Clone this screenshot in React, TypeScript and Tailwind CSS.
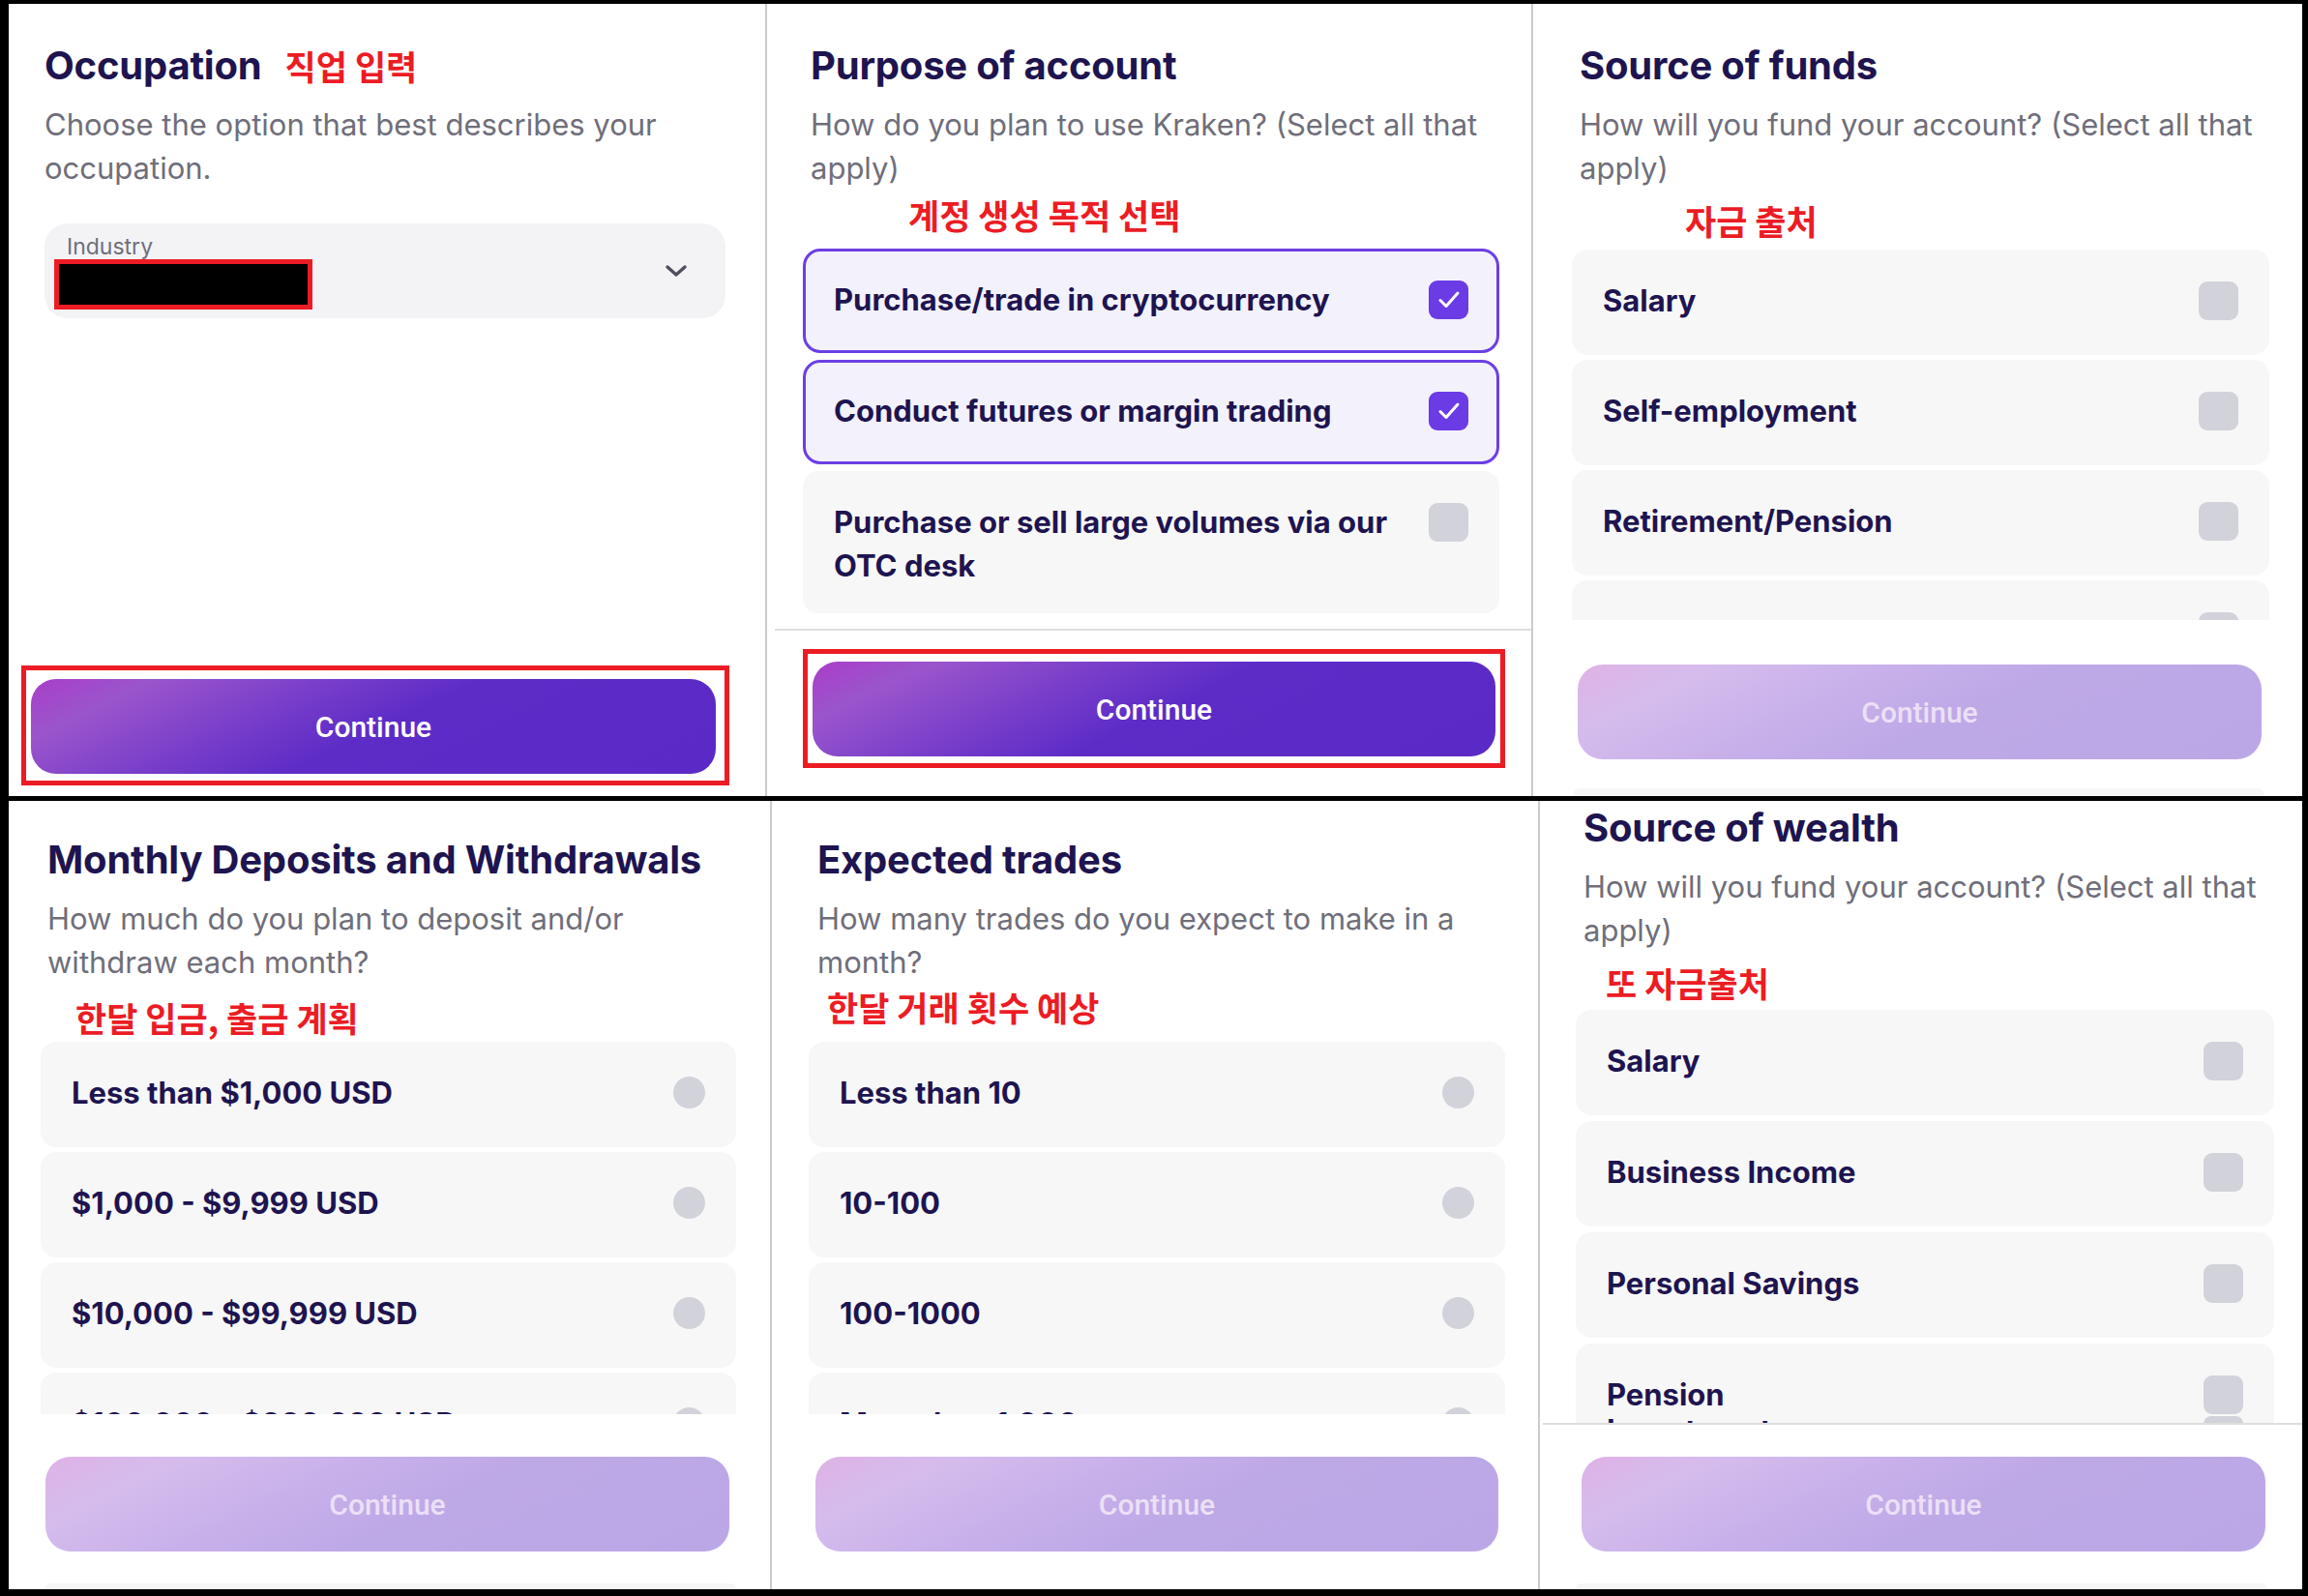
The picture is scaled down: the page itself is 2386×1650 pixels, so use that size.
import React from "react";

const TITLE = "text-[40px] font-bold leading-[48px] text-[#1e1450] whitespace-nowrap tracking-[-0.005em]";
const SUB = "text-[31px] leading-[45px] text-[#6f6e7a] whitespace-nowrap";
const RED = "font-['Noto_Sans_CJK_KR',sans-serif] font-bold text-[35px] leading-[40px] text-[#ec1c24] whitespace-nowrap";
const ROWTEXT = "text-[31px] font-bold leading-[45px] text-[#1e1450] whitespace-nowrap";

function Check({ on }: { on?: boolean }) {
  if (on) {
    return (
      <div className="mt-[3px] flex h-[40px] w-[41px] shrink-0 items-center justify-center rounded-[9px] bg-[#6b3be6]">
        <svg width="24" height="20" viewBox="0 0 24 20" fill="none">
          <path d="M3 10.5 L9 16.5 L21 3" stroke="white" strokeWidth="3" strokeLinecap="round" strokeLinejoin="round" />
        </svg>
      </div>
    );
  }
  return <div className="mt-[3px] h-[40px] w-[41px] shrink-0 rounded-[9px] bg-[#d2d2da]" />;
}

function Radio() {
  return <div className="mt-[6px] h-[33px] w-[33px] shrink-0 rounded-full bg-[#d2d2da]" />;
}

function Row({
  lines,
  control,
  selected,
  h,
  extra,
}: {
  lines: string[];
  control: React.ReactNode;
  selected?: boolean;
  h: string;
  extra?: React.ReactNode;
}) {
  return (
    <div
      className={
        selected
          ? `flex shrink-0 items-start justify-between rounded-[18px] border-[3px] border-[#6b3fe4] bg-[#f3f1fc] px-[29px] pt-[27px] ${h}`
          : `flex shrink-0 items-start justify-between rounded-[16px] bg-[#f7f7f8] px-[32px] pt-[30px] ${h}`
      }
    >
      <div className={ROWTEXT}>
        {lines.map((l, i) => (
          <div key={i}>{l}</div>
        ))}
      </div>
      <div className="flex flex-col">
        {control}
        {extra}
      </div>
    </div>
  );
}

function Btn({ on, className }: { on?: boolean; className: string }) {
  return (
    <div
      className={
        on
          ? `flex h-[98px] shrink-0 items-center justify-center rounded-[26px] bg-[linear-gradient(154deg,#aa3ec8_0%,#9a55cc_14%,#7c40ca_32%,#5d2cc7_51%,#5b2ac6_100%)] font-['Roboto',sans-serif] text-[30px] font-medium text-white ${className}`
          : `flex h-[98px] shrink-0 items-center justify-center rounded-[26px] bg-[linear-gradient(154deg,#dfb2e5_0%,#d5bced_16%,#c8b1ea_36%,#bea9e7_55%,#bba7e6_100%)] font-['Roboto',sans-serif] text-[30px] font-medium text-[#ebe0f6] ${className}`
      }
    >
      Continue
    </div>
  );
}

function Sub({ a, b, className }: { a: string; b: string; className: string }) {
  return (
    <div className={`${SUB} ${className}`}>
      <div>{a}</div>
      <div>{b}</div>
    </div>
  );
}

export default function App() {
  return (
    <div className="flex h-[1650px] w-[2386px] flex-col bg-black pb-[7px] pl-[9px] pr-[6px] pt-[4px] font-['Inter',sans-serif]">
      {/* TOP ROW */}
      <div className="flex h-[819px] shrink-0 bg-white">
        {/* Occupation */}
        <div className="flex h-full w-[782px] shrink-0 flex-col">
          <div className="ml-[37px] mt-[40px] flex items-center gap-[24px]">
            <div className={TITLE}>Occupation</div>
            <div className={RED}>직업 입력</div>
          </div>
          <Sub className="ml-[37px] mt-[14px]" a="Choose the option that best describes your" b="occupation." />
          <div className="ml-[37px] mt-[35px] flex h-[98px] w-[704px] items-center justify-between rounded-[24px] bg-[#f3f3f6]">
            <div className="flex h-full flex-col">
              <div className="ml-[23px] mt-[11px] text-[23px] leading-[26px] text-[#6f6e7a]">Industry</div>
              <div className="ml-[10px] h-[52px] w-[267px] border-[5px] border-[#ec1c24] bg-black" />
            </div>
            <svg className="mr-[38px]" width="26" height="16" viewBox="0 0 26 16" fill="none">
              <path d="M4 4 L13 12 L22 4" stroke="#4f4e5e" strokeWidth="3.4" strokeLinecap="round" strokeLinejoin="round" />
            </svg>
          </div>
          <div className="mb-[11px] ml-[13px] mt-auto w-[732px] border-[5px] border-[#ec1c24] pb-[7px] pl-[5px] pr-[9px] pt-[9px]">
            <Btn on className="w-full" />
          </div>
        </div>

        {/* Purpose of account */}
        <div className="flex h-full w-[792px] shrink-0 flex-col border-l-2 border-[#cbcbcb]">
          <div className={`${TITLE} ml-[45px] mt-[40px]`}>Purpose of account</div>
          <Sub className="ml-[45px] mt-[14px]" a="How do you plan to use Kraken? (Select all that" b="apply)" />
          <div className={`${RED} ml-[146px] mt-[6px]`}>계정 생성 목적 선택</div>
          <div className="ml-[37px] mt-[15px] flex w-[720px] flex-col gap-[7px]">
            <Row selected h="h-[108px]" lines={["Purchase/trade in cryptocurrency"]} control={<Check on />} />
            <Row selected h="h-[108px]" lines={["Conduct futures or margin trading"]} control={<Check on />} />
            <Row h="h-[147px]" lines={["Purchase or sell large volumes via our", "OTC desk"]} control={<Check />} />
          </div>
          <div className="ml-[8px] mt-[16px] h-[2px] shrink-0 bg-[#dedede]" />
          <div className="ml-[37px] mt-[19px] w-[726px] border-[5px] border-[#ec1c24] px-[5px] pb-[7px] pt-[8px]">
            <Btn on className="w-full" />
          </div>
        </div>

        {/* Source of funds */}
        <div className="flex h-full w-[797px] shrink-0 flex-col border-l-2 border-[#cbcbcb]">
          <div className={`${TITLE} ml-[48px] mt-[40px]`}>Source of funds</div>
          <Sub className="ml-[48px] mt-[14px]" a="How will you fund your account? (Select all that" b="apply)" />
          <div className={`${RED} ml-[157px] mt-[12px]`}>자금 출처</div>
          <div className="ml-[40px] mt-[10px] flex h-[383px] w-[721px] shrink-0 flex-col gap-[5px] overflow-hidden">
            <Row h="h-[109px]" lines={["Salary"]} control={<Check />} />
            <Row h="h-[109px]" lines={["Self-employment"]} control={<Check />} />
            <Row h="h-[109px]" lines={["Retirement/Pension"]} control={<Check />} />
            <Row h="h-[109px]" lines={["Investments"]} control={<Check />} />
          </div>
          <Btn className="ml-[46px] mt-[46px] w-[707px]" />
          <div className="ml-[41px] mt-auto h-[8px] w-[715px] rounded-t-[12px] bg-[#f6f6f8]" />
        </div>
      </div>

      {/* BOTTOM ROW */}
      <div className="mt-[5px] flex h-[815px] shrink-0 bg-white">
        {/* Monthly deposits */}
        <div className="flex h-full w-[787px] shrink-0 flex-col">
          <div className={`${TITLE} ml-[40px] mt-[37px]`}>Monthly Deposits and Withdrawals</div>
          <Sub className="ml-[40px] mt-[14px]" a="How much do you plan to deposit and/or" b="withdraw each month?" />
          <div className={`${RED} ml-[69px] mt-[15px]`}>한달 입금, 출금 계획</div>
          <div className="ml-[33px] mt-[5px] flex h-[385px] w-[719px] shrink-0 flex-col gap-[5px] overflow-hidden">
            <Row h="h-[109px]" lines={["Less than $1,000 USD"]} control={<Radio />} />
            <Row h="h-[109px]" lines={["$1,000 - $9,999 USD"]} control={<Radio />} />
            <Row h="h-[109px]" lines={["$10,000 - $99,999 USD"]} control={<Radio />} />
            <Row h="h-[109px]" lines={["$100,000 - $999,999 USD"]} control={<Radio />} />
          </div>
          <Btn className="ml-[38px] mt-[44px] w-[707px]" />
          <div className="ml-[37px] mt-auto h-[6px] w-[715px] rounded-t-[12px] bg-[#f6f6f8]" />
        </div>

        {/* Expected trades */}
        <div className="flex h-full w-[794px] shrink-0 flex-col border-l-2 border-[#cbcbcb]">
          <div className={`${TITLE} ml-[47px] mt-[37px]`}>Expected trades</div>
          <Sub className="ml-[47px] mt-[14px]" a="How many trades do you expect to make in a" b="month?" />
          <div className={`${RED} ml-[57px] mt-[4px]`}>한달 거래 횟수 예상</div>
          <div className="ml-[38px] mt-[16px] flex h-[385px] w-[720px] shrink-0 flex-col gap-[5px] overflow-hidden">
            <Row h="h-[109px]" lines={["Less than 10"]} control={<Radio />} />
            <Row h="h-[109px]" lines={["10-100"]} control={<Radio />} />
            <Row h="h-[109px]" lines={["100-1000"]} control={<Radio />} />
            <Row h="h-[109px]" lines={["More than 1,000"]} control={<Radio />} />
          </div>
          <Btn className="ml-[45px] mt-[44px] w-[706px]" />
        </div>

        {/* Source of wealth */}
        <div className="flex h-full w-[790px] shrink-0 flex-col border-l-2 border-[#cbcbcb]">
          <div className={`${TITLE} ml-[45px] mt-[4px]`}>Source of wealth</div>
          <Sub className="ml-[45px] mt-[14px]" a="How will you fund your account? (Select all that" b="apply)" />
          <div className={`${RED} ml-[68px] mt-[12px]`}>또 자금출처</div>
          <div className="ml-[37px] mt-[8px] flex h-[427px] w-[722px] shrink-0 flex-col gap-[6px] overflow-hidden">
            <Row h="h-[109px]" lines={["Salary"]} control={<Check />} />
            <Row h="h-[109px]" lines={["Business Income"]} control={<Check />} />
            <Row h="h-[109px]" lines={["Personal Savings"]} control={<Check />} />
            <div className="flex h-[109px] shrink-0 items-start justify-between rounded-[16px] bg-[#f7f7f8] px-[32px] pt-[30px]">
              <div className={ROWTEXT}>
                <div>Pension</div>
                <div className="-mt-[8px]">Investments</div>
              </div>
              <div className="flex flex-col">
                <Check />
                <div className="mt-[2px] h-[14px] w-[41px] rounded-t-[8px] bg-[#d2d2da]" />
              </div>
            </div>
          </div>
          <div className="ml-[3px] h-[2px] shrink-0 bg-[#dedede]" />
          <Btn className="ml-[43px] mt-[33px] w-[707px]" />
          <div className="ml-[37px] mt-auto h-[6px] w-[715px] rounded-t-[12px] bg-[#f6f6f8]" />
        </div>
      </div>
    </div>
  );
}
